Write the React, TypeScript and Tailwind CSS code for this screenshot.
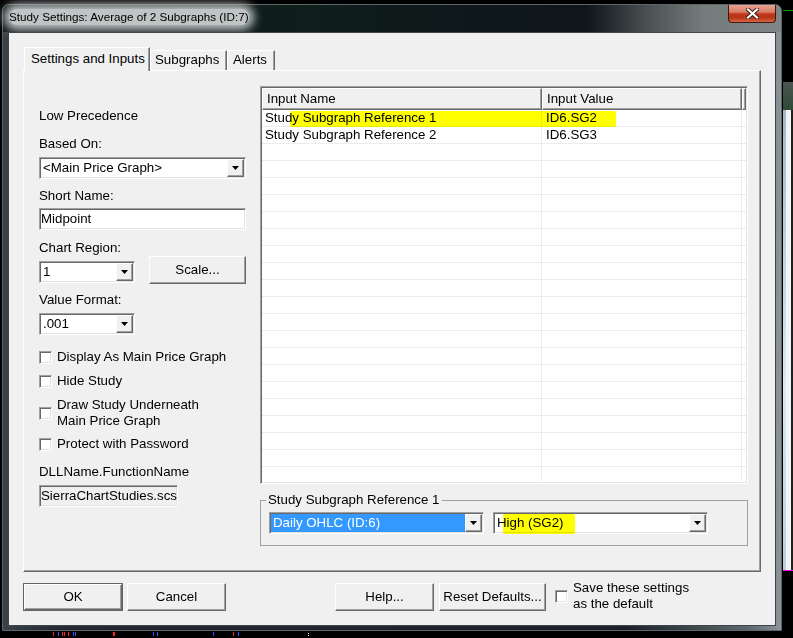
import React from 'react';

// Classic Win32 3D edges
const raised =
  'border border-t-white border-l-white border-r-[#696969] border-b-[#696969] shadow-[inset_-1px_-1px_0_#a0a0a0] bg-[#f0f0f0]';
const sunken =
  'border border-t-[#a0a0a0] border-l-[#a0a0a0] border-r-white border-b-white shadow-[inset_1px_1px_0_#696969,inset_-1px_-1px_0_#e3e3e3] p-px';

function Arrow() {
  return (
    <svg width="7" height="4" viewBox="0 0 7 4">
      <path d="M0 0h7L3.5 4z" fill="#000" />
    </svg>
  );
}

interface ComboProps {
  width: string;
  value: string;
  selected?: boolean;
  children?: React.ReactNode;
}

function Combo({ width, value, selected = false, children }: ComboProps) {
  return (
    <div className={`relative ${width} h-[22px] flex bg-white ${sunken}`}>
      <div
        className={`flex-1 pl-[2px] leading-[18px] whitespace-nowrap overflow-hidden ${
          selected ? 'bg-[#3399ff] text-white' : ''
        }`}
      >
        {value}
      </div>
      <div className={`w-[17px] flex items-center justify-center ${raised}`}>
        <Arrow />
      </div>
      {children}
    </div>
  );
}

function CheckBox() {
  return <div className={`w-[13px] h-[13px] shrink-0 bg-white ${sunken}`} />;
}

function Button({ width, label, isDefault = false }: { width: string; label: string; isDefault?: boolean }) {
  if (isDefault) {
    return (
      <div className={`${width} h-[28px] border border-[#646464]`}>
        <div className={`h-full flex items-center justify-center ${raised}`}>{label}</div>
      </div>
    );
  }
  return <div className={`${width} h-[28px] flex items-center justify-center ${raised}`}>{label}</div>;
}

const rows = Array.from({ length: 22 }, (_, i) => i);

function InputList() {
  return (
    <div className={`relative w-[488px] h-[398px] bg-white overflow-hidden ${sunken}`}>
      {/* header */}
      <div className="flex h-[22px]">
        <div className={`w-[280px] pl-[4px] pt-[2px] leading-[16px] ${raised}`}>Input Name</div>
        <div className={`w-[200px] pl-[4px] pt-[2px] leading-[16px] ${raised}`}>Input Value</div>
        <div className={`flex-1 ${raised}`} />
      </div>
      {rows.map((i) => (
        <div key={i} className="flex h-[17px] border-b border-[#ececec] leading-[16px]">
          <div className="w-[280px] pl-[3px] border-r border-[#ececec] whitespace-nowrap">
            {i === 0 ? 'Study Subgraph Reference 1' : i === 1 ? 'Study Subgraph Reference 2' : ''}
          </div>
          <div className="w-[200px] pl-[4px] border-r border-[#ececec]">
            {i === 0 ? 'ID6.SG2' : i === 1 ? 'ID6.SG3' : ''}
          </div>
        </div>
      ))}
      {/* marker highlight */}
      <div className="absolute left-[29px] top-[24px] w-[326px] h-[16px] bg-[#ffff00] mix-blend-multiply rounded-[2px]" />
    </div>
  );
}

function Label({ children, className = '' }: { children: React.ReactNode; className?: string }) {
  return <div className={`leading-[16px] whitespace-nowrap ${className}`}>{children}</div>;
}

function CheckRow({ children, className = '' }: { children: React.ReactNode; className?: string }) {
  return (
    <div className={`flex items-center gap-[5px] ${className}`}>
      <CheckBox />
      <div className="leading-[16px]">{children}</div>
    </div>
  );
}

function SettingsPanel() {
  return (
    <div className="w-[738px] h-[502px] border border-t-white border-l-white border-r-[#696969] border-b-[#696969] shadow-[inset_-1px_-1px_0_#a0a0a0] flex pl-[15px] gap-[14px]">
      {/* left column */}
      <div className="w-[207px] mt-[37px] flex flex-col">
        <Label>Low Precedence</Label>
        <Label className="mt-[12px]">Based On:</Label>
        <div className="mt-[5px]">
          <Combo width="w-[207px]" value="<Main Price Graph>" />
        </div>
        <Label className="mt-[9px]">Short Name:</Label>
        <div className={`mt-[4px] w-[207px] h-[22px] bg-white leading-[18px] ${sunken}`}>Midpoint</div>
        <Label className="mt-[10px]">Chart Region:</Label>
        <div className="flex items-start gap-[14px]">
          <div className="mt-[5px]">
            <Combo width="w-[96px]" value="1" />
          </div>
          <div className="ml-auto">
            <Button width="w-[97px]" label="Scale..." />
          </div>
        </div>
        <Label className="mt-[8px]">Value Format:</Label>
        <div className="mt-[5px]">
          <Combo width="w-[96px]" value=".001" />
        </div>
        <CheckRow className="mt-[14px]">Display As Main Price Graph</CheckRow>
        <CheckRow className="mt-[8px]">Hide Study</CheckRow>
        <CheckRow className="mt-[8px]">
          Draw Study Underneath
          <br />
          Main Price Graph
        </CheckRow>
        <CheckRow className="mt-[7px]">Protect with Password</CheckRow>
        <Label className="mt-[12px]">DLLName.FunctionName</Label>
        <div
          className={`mt-[5px] w-[139px] h-[22px] bg-[#f0f0f0] leading-[18px] whitespace-nowrap overflow-hidden ${sunken}`}
        >
          SierraChartStudies.scsf_Average2
        </div>
      </div>

      {/* right column */}
      <div className="w-[488px] mt-[15px] flex flex-col">
        <InputList />
        <fieldset className="mt-[8px] border border-[#a0a0a0] pl-[8px] pr-[8px] pt-[4px] pb-[11px] flex gap-[9px]">
          <legend className="ml-[-3px] px-[2px] leading-[16px]">Study Subgraph Reference 1</legend>
          <Combo width="w-[215px]" value="Daily OHLC (ID:6)" selected />
          <Combo width="w-[215px]" value="High (SG2)">
            <div className="absolute left-[9px] top-[1px] w-[72px] h-[20px] bg-[#ffff00] mix-blend-multiply rounded-[2px]" />
          </Combo>
        </fieldset>
      </div>
    </div>
  );
}

function CloseGlyph() {
  return (
    <svg width="13" height="11" viewBox="0 0 13 11">
      <path d="M2 1.5l9 8M11 1.5l-9 8" stroke="#3a1a14" strokeWidth="4" strokeLinecap="square" />
      <path d="M2 1.5l9 8M11 1.5l-9 8" stroke="#ffffff" strokeWidth="2.2" strokeLinecap="square" />
    </svg>
  );
}

const marks = [
  { x: 53, c: 'bg-[#ff2020]' },
  { x: 58, c: 'bg-[#3050ff]' },
  { x: 62, c: 'bg-[#ff2020]' },
  { x: 64, c: 'bg-[#ff2020]' },
  { x: 68, c: 'bg-[#ff2020]' },
  { x: 73, c: 'bg-[#3050ff]' },
  { x: 75, c: 'bg-[#3050ff]' },
  { x: 113, c: 'bg-[#ff2020]' },
  { x: 114, c: 'bg-[#ff2020]' },
  { x: 153, c: 'bg-[#3050ff]' },
  { x: 157, c: 'bg-[#3050ff]' },
  { x: 213, c: 'bg-[#3050ff]' },
  { x: 233, c: 'bg-[#ff2020]' },
  { x: 238, c: 'bg-[#3050ff]' },
];

export default function App() {
  return (
    <div className="w-[793px] h-[638px] bg-black flex overflow-hidden font-['Liberation_Sans',Arial,sans-serif] text-[13.3px] text-black">
      <div className="w-[782px] flex flex-col">
        {/* window frame */}
        <div className="ml-[2px] mt-[4px] w-[780px] h-[627px] rounded-t-[7px] border border-[#5e666a] bg-[linear-gradient(90deg,#3a4247_0%,#23292e_8%,#1b2126_80%,#5f686c_96%,#8c9599_100%)] flex flex-col px-[5px] pb-[4px]">
          {/* title bar */}
          <div className="-mx-[5px] px-[5px] h-[27px] flex items-start rounded-t-[6px] bg-[linear-gradient(90deg,#101a1c_0%,#0f1d1b_40%,#0e151b_75%,#4a5253_83%,#737c7b_90%,#7e8786_100%)]">
            <div className="ml-[1px] mt-[4px] leading-[16px] text-[11.7px] whitespace-nowrap rounded-[10px] bg-[#bfc4c4] shadow-[0_0_10px_5px_#bfc4c4]">
              Study Settings: Average of 2 Subgraphs (ID:7)
            </div>
            <div className="ml-auto w-[48px] h-[18px] rounded-b-[4px] border border-t-0 border-[#3f1a12] bg-[linear-gradient(180deg,#e8a392_0%,#d77b66_42%,#c0391b_52%,#b83515_75%,#d86848_100%)] flex items-center justify-center">
              <CloseGlyph />
            </div>
          </div>

          {/* client area */}
          <div className="flex-1 border border-[#3e454b] bg-[#f0f0f0] pl-[14px] pt-[14px] flex flex-col">
            {/* tabs */}
            <div className="flex items-end h-[23px] pl-[1px]">
              <div className="relative top-px z-10 w-[126px] h-[24px] border border-b-0 border-t-white border-l-white border-r-[#696969] shadow-[inset_-1px_0_0_#a0a0a0] bg-[#f0f0f0] pl-[6px] pt-[3px] leading-[16px] whitespace-nowrap">
                Settings and Inputs
              </div>
              <div className="w-[77px] h-[20px] border border-b-0 border-t-white border-l-white border-r-[#696969] shadow-[inset_-1px_0_0_#a0a0a0] pl-[4px] pt-[1px] leading-[16px]">
                Subgraphs
              </div>
              <div className="w-[48px] h-[20px] border border-b-0 border-t-white border-l-white border-r-[#696969] shadow-[inset_-1px_0_0_#a0a0a0] pl-[5px] pt-[1px] leading-[16px]">
                Alerts
              </div>
            </div>

            <SettingsPanel />

            {/* dialog buttons */}
            <div className="mt-[8px] flex items-start">
              <div className="mt-[3px]">
                <Button width="w-[100px]" label="OK" isDefault />
              </div>
              <div className="mt-[3px] ml-[4px]">
                <Button width="w-[99px]" label="Cancel" />
              </div>
              <div className="mt-[3px] ml-[109px]">
                <Button width="w-[99px]" label="Help..." />
              </div>
              <div className="mt-[3px] ml-[5px]">
                <Button width="w-[107px]" label="Reset Defaults..." />
              </div>
              <CheckRow className="ml-[9px]">
                Save these settings
                <br />
                as the default
              </CheckRow>
            </div>
          </div>
        </div>

        {/* chart marks below the dialog */}
        <div className="relative flex-1">
          {marks.map((m) => (
            <div key={m.x} className={`absolute top-[1px] w-[1px] h-[4px] ${m.c}`} style={{ left: m.x }} />
          ))}
          <div className="absolute left-[308px] top-[2px] w-[1px] h-[1px] bg-white" />
          <div className="absolute left-[308px] top-[4px] w-[1px] h-[1px] bg-white" />
        </div>
      </div>

      {/* window behind, on the right */}
      <div className="w-[11px] flex flex-col">
        <div className="h-[10px]" />
        <div className="h-[1px] ml-[1px] bg-[#0a9a0a]" />
        <div className="h-[71px]" />
        <div className="h-[28px] ml-[1px] bg-[linear-gradient(180deg,#4a5450_0%,#2e4a36_100%)]" />
        <div className="h-[460px] ml-[1px] flex">
          <div className="w-[3px] bg-[linear-gradient(180deg,#9fb8cc_0%,#dce8f2_60%,#b9cde0_100%)]" />
          <div className="w-[5px] bg-[#f2f4f6]" />
          <div className="w-[2px] bg-[#202020]" />
        </div>
        <div className="h-[1px] ml-[1px] bg-[#ff00ff]" />
      </div>
    </div>
  );
}
